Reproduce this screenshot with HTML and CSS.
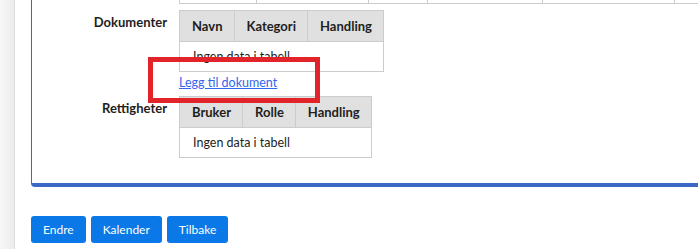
FILE: index.html
```html
<!DOCTYPE html>
<html lang="nb">
<head>
    <meta charset="UTF-8">
    <meta name="viewport" content="width=device-width, initial-scale=1.0">
    <title>Detaljer</title>
    <link rel="stylesheet" href="styles.css">
</head>
<body>
    <div class="layout">
        <aside class="rail"></aside>
        <main class="content">
            <section class="panel">
                <div class="prev-table">
                    <span class="prev-cell w1"></span>
                    <span class="prev-cell w2"></span>
                    <span class="prev-cell w3"></span>
                    <span class="prev-cell w4"></span>
                    <span class="prev-cell w5"></span>
                    <span class="prev-cell w6"></span>
                </div>

                <div class="field">
                    <div class="field-label">Dokumenter</div>
                    <div class="field-body">
                        <table class="grid">
                            <thead>
                                <tr><th>Navn</th><th>Kategori</th><th>Handling</th></tr>
                            </thead>
                            <tbody>
                                <tr><td colspan="3">Ingen data i tabell</td></tr>
                            </tbody>
                        </table>
                        <a href="#" class="add-link">Legg til dokument</a>
                    </div>
                </div>

                <div class="field">
                    <div class="field-label">Rettigheter</div>
                    <div class="field-body">
                        <table class="grid">
                            <thead>
                                <tr><th>Bruker</th><th>Rolle</th><th>Handling</th></tr>
                            </thead>
                            <tbody>
                                <tr><td colspan="3">Ingen data i tabell</td></tr>
                            </tbody>
                        </table>
                    </div>
                </div>
            </section>

            <div class="actions">
                <button type="button" class="btn">Endre</button>
                <button type="button" class="btn">Kalender</button>
                <button type="button" class="btn">Tilbake</button>
            </div>
        </main>
    </div>

    <div class="highlight"></div>
</body>
</html>
```

FILE: styles.css
```css
body {
    margin: 0;
    font-family: Lato, "Noto Sans", sans-serif;
    font-size: 12.5px;
    color: #1e1e1e;
    background: #fff;
}
.layout {
    display: flex;
    min-height: 249px;
}
.rail {
    width: 14px;
    flex-shrink: 0;
    background: linear-gradient(to right, #f7f7f7, #ececec);
    border-right: 1px solid #dcdcdc;
}
.content {
    flex: 1;
    overflow: hidden;
    padding-left: 16px;
}
.panel {
    margin-right: -20px;
    border-left: 1px solid #3a68c4;
    border-bottom: 4px solid #3a68c4;
    border-bottom-left-radius: 4px;
    padding-bottom: 25px;
}
.prev-table {
    display: flex;
    margin-left: 147px;
    height: 3px;
    border-bottom: 1px solid #ccc;
}
.prev-cell {
    flex-shrink: 0;
    border-left: 1px solid #ccc;
}
.w1 { width: 76px; }
.w2 { width: 111px; }
.w3 { width: 58px; }
.w4 { width: 114px; }
.w5 { width: 131px; }
.w6 { width: 60px; }
.field {
    display: grid;
    grid-template-columns: 147px auto;
    margin-top: 6px;
}
.field + .field {
    margin-top: 0;
}
.field-label {
    font-size: 13px;
    font-weight: bold;
    text-align: right;
    padding-right: 12px;
    padding-top: 4px;
}
.grid {
    border-collapse: collapse;
    border: 1px solid #ccc;
}
.grid th {
    background: #e0e0e0;
    font-size: 13px;
    font-weight: bold;
    text-align: left;
    height: 30px;
    padding: 0 11px 0 12px;
    border: 1px solid #ccc;
}
.grid td {
    height: 29px;
    padding: 0 12px 0 13px;
}
.add-link {
    display: block;
    color: #3366ee;
    line-height: 18px;
    margin: 2px 0 4px;
}
.actions {
    display: flex;
    gap: 5px;
    margin-top: 29px;
}
.btn {
    font-family: inherit;
    font-size: 12px;
    color: #fff;
    background: #0a78e6;
    border: none;
    border-radius: 3px;
    height: 27px;
    padding: 0 12px;
}
.highlight {
    position: absolute;
    left: 148px;
    top: 57px;
    width: 162px;
    height: 36px;
    border: 5px solid #e3232a;
}
```
